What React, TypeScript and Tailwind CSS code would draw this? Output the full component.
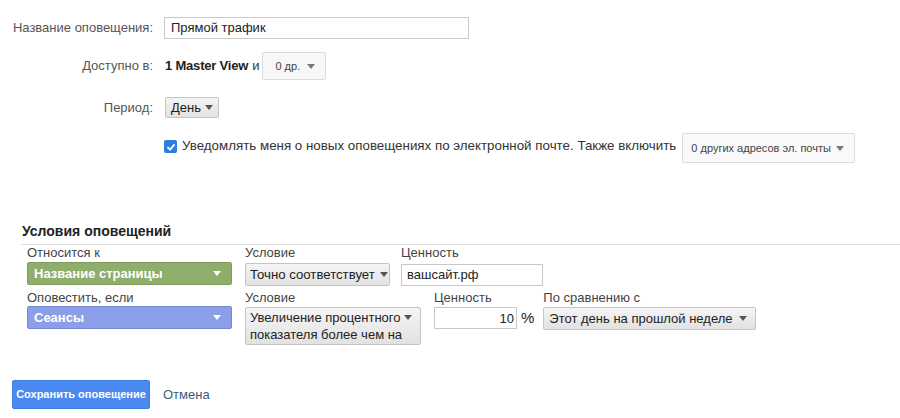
import React from "react";

const Caret = ({ className = "" }: { className?: string }) => (
  <svg width="8" height="5" viewBox="0 0 8 5" className={className}>
    <path d="M0 0 L8 0 L4 5 Z" fill="currentColor" />
  </svg>
);

export default function App() {
  return (
    <div
      className="relative w-[900px] h-[418px] bg-white text-[13px] text-[#333] overflow-hidden"
      style={{ fontFamily: '"Liberation Sans", Arial, sans-serif' }}
    >
      {/* top form */}
      <div className="pt-[17px] flex flex-col">
        {/* row 1 */}
        <div className="flex items-center h-[22px]">
          <div className="w-[153px] text-right text-[#555]">Название оповещения:</div>
          <div className="ml-[11px] w-[305px] h-[22px] border border-[#c8c8c8] bg-white flex items-center px-[6px] text-[#222]">
            Прямой трафик
          </div>
        </div>
        {/* row 2 */}
        <div className="flex items-center h-[28px] mt-[13px]">
          <div className="w-[153px] text-right text-[#555]">Доступно в:</div>
          <div className="ml-[12px] font-bold text-[#222] tracking-[-0.2px]">1 Master View</div>
          <div className="ml-[4px] text-[#333]">и</div>
          <div className="ml-[3px] w-[64px] h-[28px] border border-[#dcdcdc] rounded-[2px] bg-[#f7f7f7] flex items-center justify-between pl-[12px] pr-[10px] text-[11px] text-[#444]">
            <span>0 др.</span>
            <Caret className="text-[#777]" />
          </div>
        </div>
        {/* row 3 */}
        <div className="flex items-center h-[21px] mt-[17px]">
          <div className="w-[153px] text-right text-[#555]">Период:</div>
          <div className="ml-[12px] h-[21px] px-[5px] border border-[#c4c4c4] rounded-[2px] bg-gradient-to-b from-[#f5f5f5] to-[#e2e2e2] flex items-center gap-[4px] text-[#222]">
            <span>День</span>
            <Caret className="text-[#555]" />
          </div>
        </div>
        {/* row 4 */}
        <div className="flex items-center h-[30px] mt-[15px] pl-[164px]">
          <div className="w-[13px] h-[13px] -mt-[3px] rounded-[2px] bg-[#2f7de1] flex items-center justify-center">
            <svg width="10" height="10" viewBox="0 0 10 10">
              <path d="M1.5 5.2 L4 7.6 L8.6 2.4" stroke="white" strokeWidth="1.8" fill="none" />
            </svg>
          </div>
          <div className="ml-[5px] -mt-[3px] text-[13.35px] text-[#333]">
            Уведомлять меня о новых оповещениях по электронной почте. Также включить
          </div>
          <div className="ml-[6px] w-[173px] h-[30px] border border-[#dcdcdc] rounded-[2px] bg-[#f9f9f9] flex items-center justify-between pl-[8px] pr-[10px] text-[11px] text-[#444]">
            <span>0 других адресов эл. почты</span>
            <Caret className="text-[#777]" />
          </div>
        </div>
      </div>

      {/* conditions */}
      <div className="mt-[60px] pl-[21px]">
        <div className="pl-[1px] text-[14px] font-bold text-[#222] leading-[17px]">Условия оповещений</div>
        <div className="mt-[4px] h-px bg-[#e0e0e0]" />
        {/* row 1 */}
        <div className="flex pl-[6px] h-[45px]">
          <div className="w-[205px]">
            <div className="text-[#444] leading-[15px]">Относится к</div>
            <div className="mt-[2px] h-[23px] rounded-[2px] border border-[#7f9b5c] bg-[#8fad6b] flex items-center justify-between pl-[6px] pr-[10px] text-white font-bold">
              <span>Название страницы</span>
              <Caret className="text-white" />
            </div>
          </div>
          <div className="ml-[13px] w-[145px]">
            <div className="text-[#444] leading-[15px]">Условие</div>
            <div className="mt-[3px] h-[23px] rounded-[2px] border border-[#c4c4c4] bg-gradient-to-b from-[#f5f5f5] to-[#e2e2e2] flex items-center gap-[5px] pl-[4px] text-[#222] whitespace-nowrap">
              <span className="text-[13.2px]">Точно соответствует</span>
              <Caret className="text-[#555] shrink-0" />
            </div>
          </div>
          <div className="ml-[11px] w-[142px]">
            <div className="text-[#444] leading-[15px]">Ценность</div>
            <div className="mt-[4px] h-[22px] border border-[#c8c8c8] bg-white flex items-center px-[5px] text-[#222]">
              вашсайт.рф
            </div>
          </div>
        </div>
        {/* row 2 */}
        <div className="flex pl-[6px]">
          <div className="w-[205px]">
            <div className="text-[#444] leading-[15px]">Оповестить, если</div>
            <div className="mt-[1px] h-[23px] rounded-[2px] border border-[#7689d4] bg-[#8b9ee8] flex items-center justify-between pl-[6px] pr-[10px] text-white font-bold">
              <span>Сеансы</span>
              <Caret className="text-white" />
            </div>
          </div>
          <div className="ml-[13px] w-[176px]">
            <div className="text-[#444] leading-[15px]">Условие</div>
            <div className="mt-[2px] h-[38px] rounded-[2px] border border-[#c4c4c4] bg-gradient-to-b from-[#f5f5f5] to-[#e2e2e2] flex items-start justify-between pl-[4px] pr-[8px] pt-[1px] text-[#222] leading-[17px]">
              <span>Увеличение процентного<br />показателя более чем на</span>
              <Caret className="text-[#555] mt-[6px]" />
            </div>
          </div>
          <div className="ml-[13px] flex flex-col">
            <div className="text-[#444] leading-[15px]">Ценность</div>
            <div className="mt-[2px] flex items-center">
              <div className="w-[83px] h-[22px] border border-[#c8c8c8] bg-white flex items-center justify-end pr-[2px] text-[#222]">
                10
              </div>
              <span className="ml-[4px] text-[15px] text-[#222]">%</span>
            </div>
          </div>
          <div className="ml-[9px] w-[213px]">
            <div className="text-[#444] leading-[15px]">По сравнению с</div>
            <div className="mt-[2px] h-[23px] rounded-[2px] border border-[#c4c4c4] bg-gradient-to-b from-[#f5f5f5] to-[#e2e2e2] flex items-center justify-between pl-[5px] pr-[8px] text-[#222]">
              <span>Этот день на прошлой неделе</span>
              <Caret className="text-[#555]" />
            </div>
          </div>
        </div>
      </div>

      {/* buttons */}
      <div className="absolute left-[12px] top-[380px] flex items-center">
        <div className="w-[138px] h-[29px] bg-[#4a8af0] border border-[#3f7fe0] rounded-[2px] flex items-center justify-center text-white font-bold text-[11px]">
          Сохранить оповещение
        </div>
        <div className="ml-[13px] text-[#3d5d80]">Отмена</div>
      </div>
    </div>
  );
}
